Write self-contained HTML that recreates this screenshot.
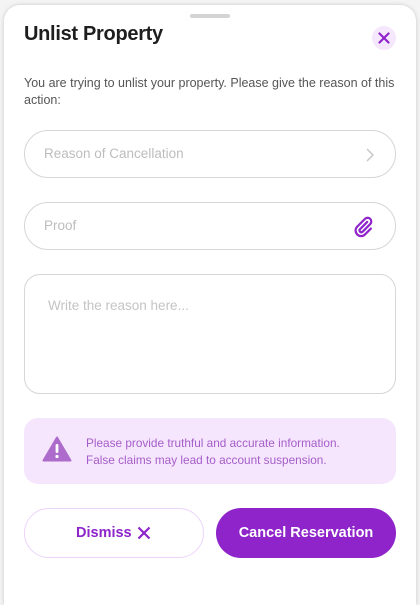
<!DOCTYPE html>
<html><head><style>
*{box-sizing:border-box;margin:0;padding:0}
body{width:420px;height:600px;background:#f4f4f4;font-family:"Liberation Sans",sans-serif;overflow:hidden;position:relative}
.card{position:absolute;left:4px;top:5px;width:412px;height:600px;background:#fff;border-radius:16px 16px 0 0;box-shadow:0 0 4px rgba(0,0,0,.18)}
.handle{position:absolute;left:190px;top:14px;width:40px;height:4px;border-radius:2px;background:#d4d4d4}
h1{position:absolute;left:24px;top:23px;font-size:20px;font-weight:bold;color:#1e1e1e;letter-spacing:-0.3px}
.close{position:absolute;left:372px;top:26px;width:24px;height:24px;border-radius:50%;background:#f5e8fd}
p.d{position:absolute;left:24px;top:75px;width:380px;font-size:12.5px;line-height:17px;color:#555}
.f{position:absolute;left:24px;width:372px;height:48px;border:1px solid #d6d6d6;border-radius:24px;font-size:13.5px;color:#bdbdbd;padding:15px 0 0 19px}
.ta{position:absolute;left:24px;top:274px;width:372px;height:120px;border:1px solid #d6d6d6;border-radius:16px;font-size:13.5px;color:#c4c4c4;padding:23px 0 0 23px}
.al{position:absolute;left:24px;top:418px;width:372px;height:66px;background:#f5e5fd;border-radius:14px}
.al span{position:absolute;left:62px;top:17px;font-size:11.8px;line-height:17px;color:#a55ec9}
.b{position:absolute;top:508px;height:50px;border-radius:25px;font-size:14.5px;font-weight:bold;line-height:50px}
</style></head><body>
<div class="card"></div>
<div class="handle"></div>
<h1>Unlist Property</h1>
<div class="close"><svg width="24" height="24" viewBox="0 0 24 24"><path d="M7.5 7.5l9 9M16.5 7.5l-9 9" stroke="#8e24c9" stroke-width="2.2" stroke-linecap="round"/></svg></div>
<p class="d">You are trying to unlist your property. Please give the reason of this action:</p>
<div class="f" style="top:130px">Reason of Cancellation<svg style="position:absolute;right:20px;top:16px" width="10" height="16" viewBox="0 0 10 16"><path d="M2 2l6 6-6 6" stroke="#c8c8c8" stroke-width="1.5" fill="none"/></svg></div>
<div class="f" style="top:202px">Proof<svg style="position:absolute;right:20px;top:13px" width="22" height="22" viewBox="0 0 24 24"><path d="M15.5 6.5l-8 8a2 2 0 0 0 2.8 2.8l8.5-8.5a4 4 0 0 0-5.7-5.7L4.6 11.6a6 6 0 0 0 8.5 8.5l6.4-6.4" stroke="#8e24c9" stroke-width="2.4" fill="none" stroke-linecap="round"/></svg></div>
<div class="ta">Write the reason here...</div>
<div class="al"><svg style="position:absolute;left:18px;top:18px" width="30" height="26" viewBox="0 0 30 26"><path d="M15 1.5L28.5 24.5H1.5Z" fill="#ad6ccb" stroke="#ad6ccb" stroke-width="2" stroke-linejoin="round"/><rect x="13.6" y="8" width="2.8" height="9" rx="1.2" fill="#fff"/><circle cx="15" cy="20.5" r="1.6" fill="#fff"/></svg><span>Please provide truthful and accurate information.<br>False claims may lead to account suspension.</span></div>
<div class="b" style="left:24px;width:180px;border:1px solid #ecd4fa;color:#8e24c9"><span style="position:absolute;left:51px;top:-1px">Dismiss</span><svg style="position:absolute;left:112px;top:17px" width="14" height="14" viewBox="0 0 14 14"><path d="M1.5 1.5l11 11M12.5 1.5l-11 11" stroke="#8e24c9" stroke-width="2.2"/></svg></div>
<div class="b" style="left:216px;width:180px;background:#8e24c9;color:#fff;text-align:center">Cancel Reservation</div>
</body></html>
